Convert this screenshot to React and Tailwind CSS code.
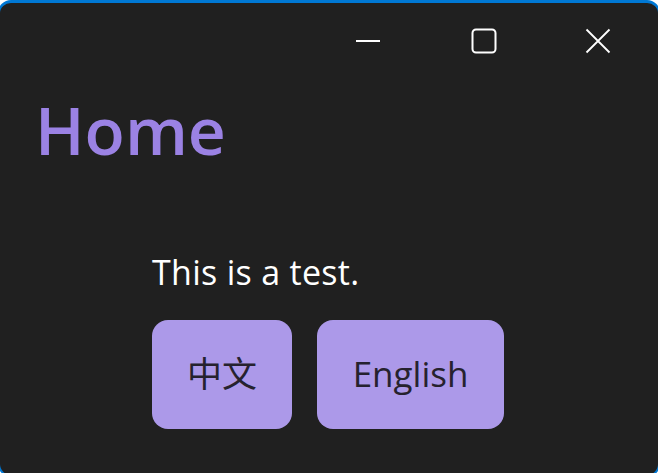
import { useState } from 'react'

const font = { fontFamily: '"Open Sans", "Noto Sans CJK SC", sans-serif' }

function Minimize() {
  return (
    <svg width="26" height="26" viewBox="0 0 26 26" fill="none">
      <path d="M1 13h24" stroke="white" strokeWidth="2" />
    </svg>
  )
}

function Maximize() {
  return (
    <svg width="26" height="26" viewBox="0 0 26 26" fill="none">
      <rect x="1.5" y="1.5" width="23" height="23" rx="3.5" stroke="white" strokeWidth="2" />
    </svg>
  )
}

function Close() {
  return (
    <svg width="26" height="26" viewBox="0 0 26 26" fill="none">
      <path d="M1.5 1.5l23 23M24.5 1.5l-23 23" stroke="white" strokeWidth="1.8" />
    </svg>
  )
}

export default function App() {
  const [lang, setLang] = useState('en')

  return (
    <div className="h-[473px] w-[658px] overflow-hidden bg-white" style={font}>
      <div className="mx-[-2px] flex h-[477px] flex-col rounded-[13px] border-2 border-t-[3px] border-[#0078d4] bg-[#202020]">
        {/* title bar */}
        <div className="flex h-[75px] shrink-0 justify-end">
          <button className="flex w-[124px] items-center justify-center">
            <Minimize />
          </button>
          <button className="flex w-[108px] items-center justify-center">
            <Maximize />
          </button>
          <button className="flex w-[120px] items-center justify-center">
            <Close />
          </button>
        </div>

        <h1 className="mt-[3px] pl-[35px] text-[66px] font-semibold leading-[96px] text-[#9b82e4]">Home</h1>

        <div className="mt-[73px] flex flex-col pl-[152px]">
          <p className="text-[34px] leading-[44px] tracking-[0.3px] text-white">
            {lang === 'zh' ? 'This is a test.' : 'This is a test.'}
          </p>
          <div className="mt-[26px] flex gap-[25px]">
            <button
              onClick={() => setLang('zh')}
              className="flex h-[109px] w-[140px] items-center justify-center rounded-[16px] bg-[#ac99e9] text-[35px] text-[#26222e]"
            >
              中文
            </button>
            <button
              onClick={() => setLang('en')}
              className="flex h-[109px] w-[187px] items-center justify-center rounded-[16px] bg-[#ac99e9] text-[35px] text-[#26222e]"
            >
              English
            </button>
          </div>
        </div>
      </div>
    </div>
  )
}
